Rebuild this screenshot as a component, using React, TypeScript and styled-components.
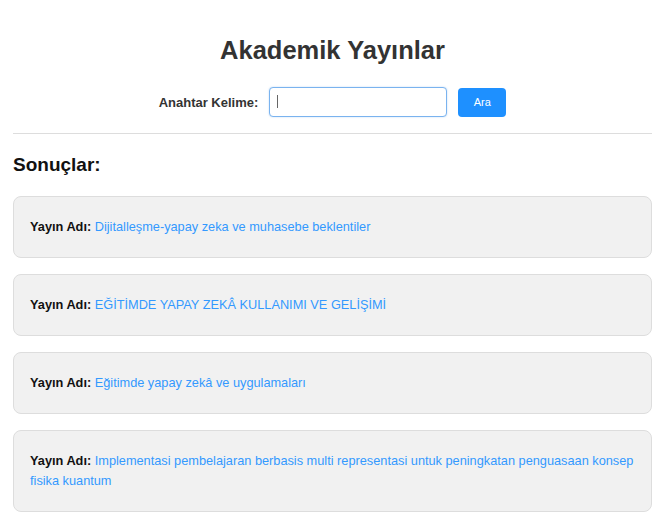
import React from "react";
import styled, { createGlobalStyle } from "styled-components";

const Global = createGlobalStyle`
  body {
    margin: 0;
    font-family: "Liberation Sans", Arial, sans-serif;
    background: #ffffff;
    color: #333;
  }
`;

const Page = styled.div`
  padding: 0 10px 0 13px;
`;

const Title = styled.h1`
  margin: 0;
  padding-top: 35px;
  text-align: center;
  font-size: 25.5px;
  font-weight: bold;
  color: #333;
  line-height: 30px;
`;

const SearchRow = styled.form`
  display: flex;
  justify-content: center;
  align-items: center;
  margin-top: 22px;
  gap: 12px;
`;

const Label = styled.label`
  font-size: 13px;
  font-weight: bold;
  color: #333;
  margin-right: -1px;
`;

const InputWrap = styled.div`
  position: relative;
  display: flex;
  align-items: center;
`;

const Input = styled.input`
  box-sizing: border-box;
  width: 178px;
  height: 30px;
  border: 1px solid #7ab3ef;
  border-radius: 4px;
  padding: 0 8px;
  font-family: inherit;
  font-size: 13px;
  outline: none;
  box-shadow: 0 0 2px rgba(100, 160, 230, 0.4);
`;

const Caret = styled.span`
  position: absolute;
  left: 8px;
  top: 8px;
  width: 1px;
  height: 13px;
  background: #666;
`;

const Button = styled.button`
  box-sizing: border-box;
  width: 48px;
  height: 29px;
  margin-left: -1px;
  border: none;
  border-radius: 4px;
  background: #1e90ff;
  color: #fff;
  font-family: inherit;
  font-size: 11px;
`;

const Divider = styled.hr`
  border: none;
  border-top: 1px solid #ddd;
  margin: 16px 0 0 0;
`;

const SubTitle = styled.h2`
  margin: 19px 0 0 0;
  font-size: 19px;
  font-weight: bold;
  color: #111;
  line-height: 24px;
`;

const List = styled.div`
  display: flex;
  flex-direction: column;
  gap: 16px;
  margin-top: 19px;
`;

const Card = styled.div`
  background: #f1f1f1;
  border: 1px solid #ddd;
  border-radius: 8px;
  padding: 20px 16px;
  font-size: 12.75px;
  line-height: 20px;
`;

const Key = styled.strong`
  color: #111;
`;

const Link = styled.a`
  color: #3399ff;
  text-decoration: none;
`;

const items = [
  "Dijitalleşme-yapay zeka ve muhasebe beklentiler",
  "EĞİTİMDE YAPAY ZEKÂ KULLANIMI VE GELİŞİMİ",
  "Eğitimde yapay zekâ ve uygulamaları",
  "Implementasi pembelajaran berbasis multi representasi untuk peningkatan penguasaan konsep fisika kuantum",
];

export default function App() {
  return (
    <>
      <Global />
      <Page>
        <Title>Akademik Yayınlar</Title>
        <SearchRow onSubmit={(e) => e.preventDefault()}>
          <Label htmlFor="kw">Anahtar Kelime:</Label>
          <InputWrap>
            <Input id="kw" />
            <Caret />
          </InputWrap>
          <Button type="submit">Ara</Button>
        </SearchRow>
        <Divider />
        <SubTitle>Sonuçlar:</SubTitle>
        <List>
          {items.map((t) => (
            <Card key={t}>
              <Key>Yayın Adı:</Key> <Link href="#">{t}</Link>
            </Card>
          ))}
        </List>
      </Page>
    </>
  );
}
